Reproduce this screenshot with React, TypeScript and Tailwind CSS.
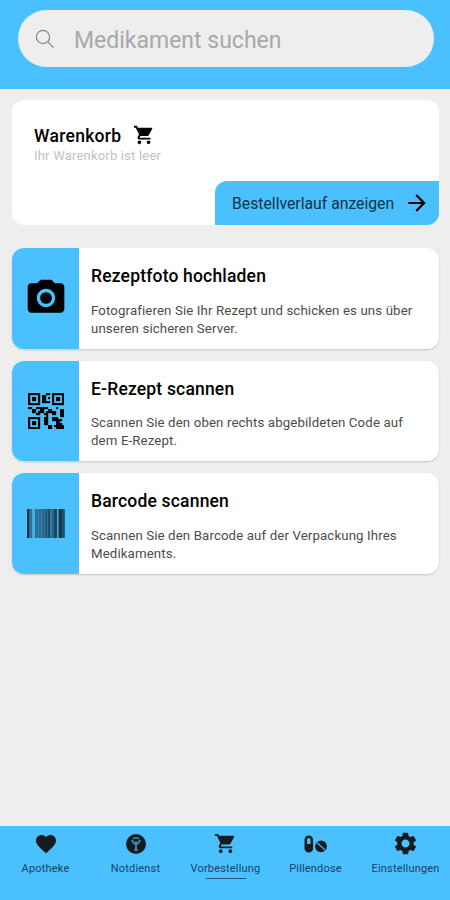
import type { ReactNode } from 'react'
import { MdArrowForward, MdCameraAlt, MdFavorite, MdSettings, MdShoppingCart } from 'react-icons/md'

const qrRows = [
  '######...##.######',
  '#....#.##...#....#',
  '#.##.#.##.#.#.##.#',
  '#.##.#.##...#.##.#',
  '#....#.####.#....#',
  '######......######',
  '..................',
  '##..######....#...',
  '..##..##..##....##',
  '..##.###.#####..##',
  '....##..##..##..##',
  '.........#......##',
  '######..##..###...',
  '#....#..##..#####.',
  '#.##.#..##....##..',
  '#.##.#..##....###.',
  '#....#....##.#####',
  '######....##..####',
]

function QrIcon() {
  return (
    <svg width="36" height="36" viewBox="0 0 18 18">
      {qrRows.map((row, y) =>
        row.split('').map((c, x) => c === '#' && <rect key={`${x}-${y}`} x={x} y={y} width="1.08" height="1.08" />)
      )}
    </svg>
  )
}

// x, width, opacity
const bars = [
  [0, 2.2, 0.72], [2.2, 3, 0.35], [8, 3, 0.36], [11, 1, 0.25], [12, 2, 0.38], [14, 1, 0.25],
  [15, 2, 0.42], [17, 1, 0.3], [18, 2, 0.5], [20, 1, 0.35], [21, 2.6, 0.55], [24.4, 1.6, 0.45],
  [26, 1, 0.4], [27, 3, 0.6], [31.5, 4, 0.68], [35.5, 2.3, 0.55],
]

function BarcodeIcon() {
  return (
    <svg width="38" height="29" viewBox="0 0 38 29">
      <rect width="38" height="29" fillOpacity="0.08" />
      {bars.map(([x, w, o]) => (
        <rect key={x} x={x} width={w} height="29" fillOpacity={o} />
      ))}
    </svg>
  )
}

function EmergencyIcon() {
  return (
    <svg width="20" height="20" viewBox="0 0 20 20" fill="none">
      <circle cx="10" cy="10" r="10" fill="#151c20" />
      <path d="M5 7.2c1.4-1 2-.8 2.4-.2M15 7.2c-1.4-1-2-.8-2.4-.2M7 5c1.8-1.4 4.2-1.4 6 0" stroke="#3f9ecb" strokeWidth="1.1" />
      <path d="M6 7.5h8c-.3 2.2-1.6 3.3-4 3.3S6.3 9.7 6 7.5z" fill="#3587ae" />
      <path d="M10 10v6M8.3 16h3.4" stroke="#3f9ecb" strokeWidth="1.6" />
    </svg>
  )
}

function PillsIcon() {
  return (
    <svg width="23" height="18" viewBox="0 0 23 18" fill="none">
      <rect x="1.8" y="1.8" width="6" height="14.4" rx="3" stroke="#151c20" strokeWidth="2.6" />
      <path d="M1.8 9h6v4.500a3 3 0 0 1-6 0z" fill="#151c20" />
      <circle cx="17" cy="11.3" r="5.9" fill="#151c20" />
      <path d="M12.8 7.5l8.400 7.600" stroke="#4bc0ff" strokeWidth="1.2" />
    </svg>
  )
}

const actions: { title: string; lines: string[]; icon: ReactNode }[] = [
  {
    title: 'Rezeptfoto hochladen',
    lines: ['Fotografieren Sie Ihr Rezept und schicken es uns über', 'unseren sicheren Server.'],
    icon: <MdCameraAlt size={44} />,
  },
  {
    title: 'E-Rezept scannen',
    lines: ['Scannen Sie den oben rechts abgebildeten Code auf', 'dem E-Rezept.'],
    icon: <QrIcon />,
  },
  {
    title: 'Barcode scannen',
    lines: ['Scannen Sie den Barcode auf der Verpackung Ihres', 'Medikaments.'],
    icon: <BarcodeIcon />,
  },
]

const tabs: { label: string; icon: ReactNode; active?: boolean }[] = [
  { label: 'Apotheke', icon: <MdFavorite size={24} /> },
  { label: 'Notdienst', icon: <EmergencyIcon /> },
  { label: 'Vorbestellung', icon: <MdShoppingCart size={23} />, active: true },
  { label: 'Pillendose', icon: <PillsIcon /> },
  { label: 'Einstellungen', icon: <MdSettings size={27} /> },
]

export default function App() {
  return (
    <div className="flex h-[900px] w-[450px] flex-col overflow-hidden bg-[#eeeeee] font-[Roboto,sans-serif] text-black">
      <header className="h-[89px] shrink-0 bg-[#4bc0ff] pt-[10px] pr-4 pl-[18px]">
        <div className="flex h-[57px] items-center rounded-full bg-[#eeeeee] pl-[17px]">
          <svg width="20" height="20" viewBox="0 0 20 20" fill="none" stroke="#858585" strokeWidth="1.2">
            <circle cx="8" cy="8" r="6.6" />
            <path d="M12.8 12.8l5.7 5.7" />
          </svg>
          <span className="ml-[19px] pt-[5px] text-[23px] leading-7 text-[#a8a8a8]">Medikament suchen</span>
        </div>
      </header>

      <main className="flex-1 pt-[11px] pr-[11px] pl-3">
        <section className="flex h-[125px] flex-col justify-between overflow-hidden rounded-xl bg-white">
          <div className="pt-[23px] pl-[22px]">
            <div className="flex h-6 items-center">
              <h2 className="w-[99px] pt-px text-[17.5px] leading-6 font-medium tracking-[0.3px]">Warenkorb</h2>
              <MdShoppingCart size={22} />
            </div>
            <p className="text-[13px] leading-[18px] tracking-[0.2px] text-[#c2c2c2]">Ihr Warenkorb ist leer</p>
          </div>
          <button className="flex h-11 w-[224px] items-center self-end rounded-tl-xl bg-[#4bc0ff] pl-[17px]">
            <span className="w-[172px] pt-0.5 text-left text-[15.75px] whitespace-nowrap text-[#123245]">
              Bestellverlauf anzeigen
            </span>
            <MdArrowForward size={26} />
          </button>
        </section>

        <div className="mt-[23px] flex flex-col gap-3">
          {actions.map(a => (
            <section key={a.title} className="flex h-[100.5px] overflow-hidden rounded-xl bg-white shadow-[0_1px_2px_rgba(0,0,0,0.18)]">
              <div className="flex w-[67px] shrink-0 items-center justify-center bg-[#4bc0ff]">{a.icon}</div>
              <div className="pt-4 pl-3 whitespace-nowrap">
                <h2 className="text-[17.5px] leading-6 font-medium tracking-[0.18px]">{a.title}</h2>
                <p className="mt-[13.5px] text-[13.25px] leading-[18px] tracking-[0.12px] text-[#4c4c4c]">
                  {a.lines.map(l => (
                    <span key={l} className="block">{l}</span>
                  ))}
                </p>
              </div>
            </section>
          ))}
        </div>
      </main>

      <nav className="grid h-[74px] shrink-0 grid-cols-5 bg-[#4bc0ff] pt-1">
        {tabs.map(t => (
          <div key={t.label} className="flex flex-col items-center pl-px text-[#151c20]">
            <div className="flex h-[27px] items-center">{t.icon}</div>
            <span className="mt-[5px] text-[11px] leading-[14px] tracking-[0.18px] whitespace-nowrap text-[#174460]">{t.label}</span>
            {t.active && <div className="mt-0.5 h-px w-10 bg-[#1d587a]" />}
          </div>
        ))}
      </nav>
    </div>
  )
}
